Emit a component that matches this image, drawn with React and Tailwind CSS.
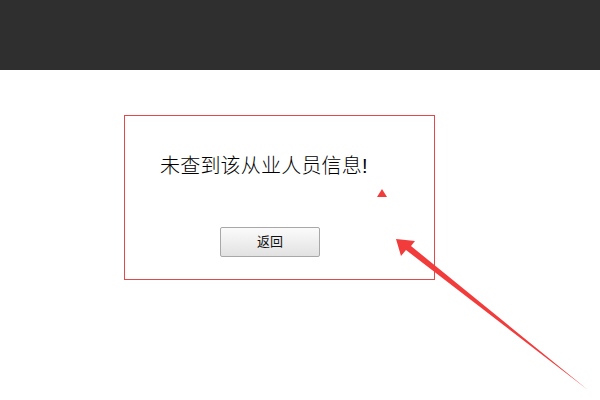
import React from "react";

export default function App() {
  return (
    <div
      className="relative w-[600px] h-[400px] bg-white overflow-hidden"
      style={{ fontFamily: '"Liberation Sans", "Noto Sans CJK SC", sans-serif' }}
    >
      <div className="h-[70px] bg-[#2f2f2f]" />
      <div className="mt-[45px] ml-[124px] w-[311px] h-[165px] border border-[#e04a4a] flex flex-col">
        <div className="pl-[35px] pt-[38px] text-[20px] leading-[24px] font-light tracking-[0.2px] text-black">
          未查到该从业人员信息!
        </div>
        <div className="mt-[49px] ml-[95px]">
          <button className="w-[100px] h-[30px] border border-[#a8a8a8] rounded-[2px] bg-gradient-to-b from-[#fbfbfb] to-[#e2e2e2] text-[13px] text-[#111] flex items-center justify-center">
            返回
          </button>
        </div>
      </div>
      <svg
        className="absolute left-0 top-0 pointer-events-none"
        width="600"
        height="400"
        viewBox="0 0 600 400"
      >
        <polygon points="382,189 387,197 377,197" fill="#f23c3c" />
        <polygon
          points="396,239 415,241 411,246 588,390 406,250 401,256"
          fill="#f23c3c"
        />
      </svg>
    </div>
  );
}
